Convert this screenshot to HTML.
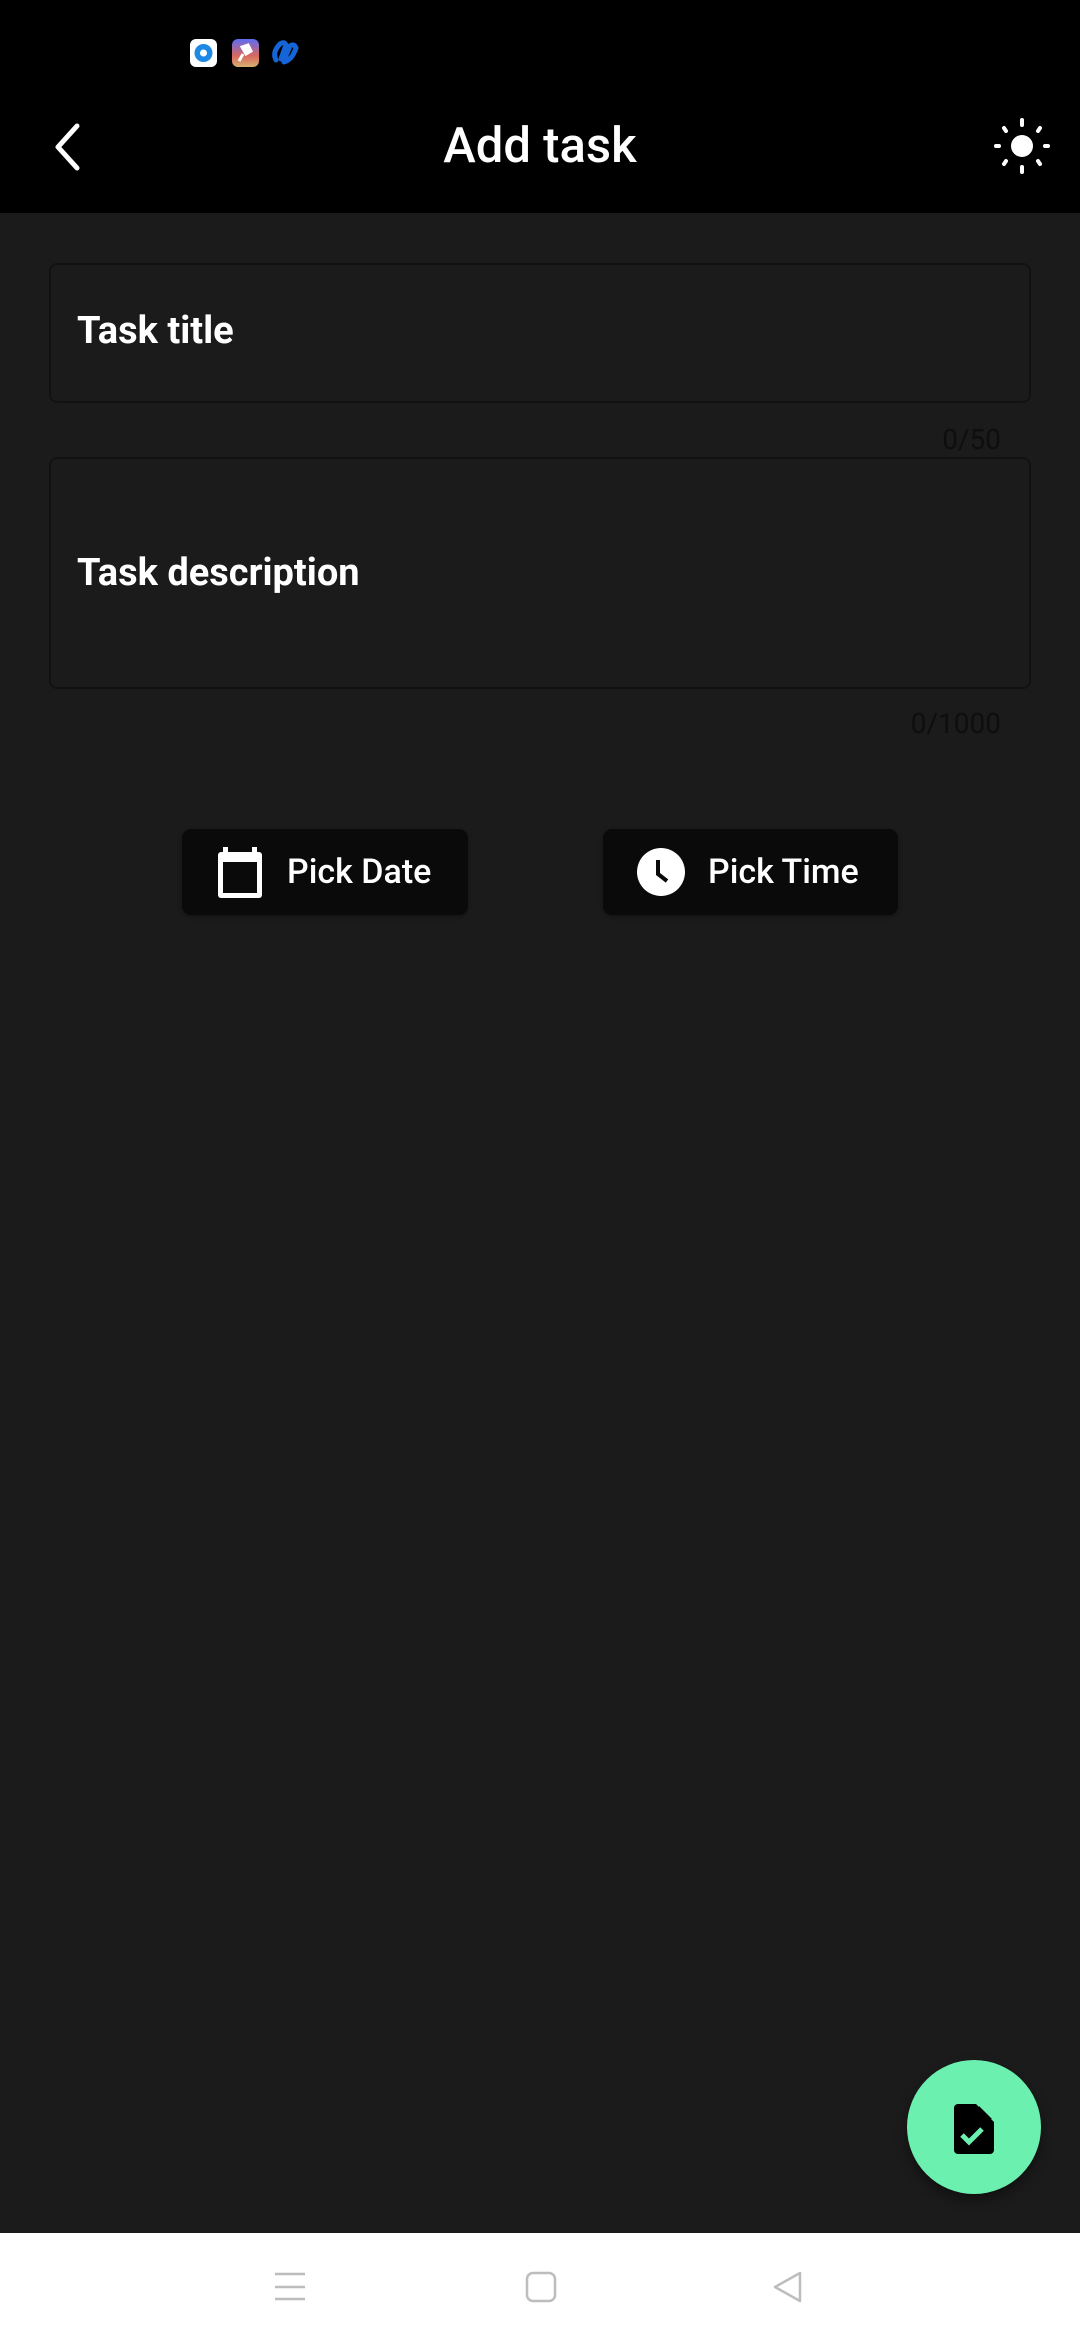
<!DOCTYPE html>
<html><head><meta charset="utf-8">
<style>
*{margin:0;padding:0;box-sizing:border-box}
html,body{width:1080px;height:2340px;overflow:hidden;background:#1b1b1b;font-family:"Roboto","Liberation Sans",sans-serif}
.abs{position:absolute}
#top{left:0;top:0;width:1080px;height:213px;background:#000}
.title{left:0;width:1080px;top:116px;text-align:center;color:#fff;font-size:49px;line-height:60px;font-weight:500}
.field{left:49px;width:982px;border:2px solid #121212;border-radius:8px;background:#1b1b1b}
.lbl{left:77px;color:#fff;font-weight:bold;font-size:38px;line-height:46px}
.cnt{color:#0e0e0e;font-size:28px;line-height:32px;text-align:right;right:79px}
.btn{background:#0a0a0a;border-radius:9px;top:829px;height:86px;box-shadow:0 2px 4px rgba(0,0,0,.3)}
.bt{color:#fff;font-size:34px;line-height:40px;top:852px;font-weight:500}
#nav{left:0;top:2233px;width:1080px;height:107px;background:#fff}
</style></head><body>
<div id="top" class="abs"></div>
<svg class="abs" style="left:190px;top:38px" width="120" height="30" viewBox="0 0 120 30">
<rect x="0" y="1" width="27" height="28" rx="6" fill="#fff"/>
<circle cx="13.5" cy="15" r="9" fill="#1e88e5"/><circle cx="13.5" cy="15" r="3.5" fill="#fff"/>
<defs><linearGradient id="g" x1="0" y1="0" x2="0" y2="1"><stop offset="0" stop-color="#5b6cf5"/><stop offset=".6" stop-color="#d9675f"/><stop offset="1" stop-color="#d8b070"/></linearGradient></defs>
<rect x="42" y="1" width="27" height="28" rx="6" fill="url(#g)"/>
<path d="M52 9l6 -2 3 6 -5 3z M53 16l-4 7" stroke="#fff" stroke-width="3" fill="#fff"/>
<path d="M86 22 q-4 -8 4 -16 q4 -3 6 1 l-5 14 M94 24 q8 -2 12 -14 q-2 -5 -6 -2 l-6 14" stroke="#1565d8" stroke-width="5" fill="none" stroke-linecap="round"/>
</svg>
<svg class="abs" style="left:50px;top:120px" width="36" height="54" viewBox="0 0 36 54"><path d="M27 6L8 27l19 21" stroke="#fff" stroke-width="5" fill="none" stroke-linecap="round" stroke-linejoin="round"/></svg>
<div class="abs title">Add task</div>
<svg class="abs" style="left:992px;top:116px" width="60" height="60" viewBox="0 0 60 60">
<circle cx="30" cy="30" r="11" fill="#fff"/>
<g stroke="#fff" stroke-width="4" stroke-linecap="round">
<line x1="30" y1="4" x2="30" y2="9"/><line x1="30" y1="51" x2="30" y2="56"/>
<line x1="4" y1="30" x2="7" y2="30"/><line x1="53" y1="30" x2="56" y2="30"/>
<line x1="12" y1="12" x2="14" y2="15"/><line x1="48" y1="12" x2="46" y2="15"/>
<line x1="12" y1="48" x2="14" y2="45"/><line x1="48" y1="48" x2="46" y2="45"/></g></svg>

<div class="abs field" style="top:263px;height:140px"></div>
<div class="abs lbl" style="top:308px">Task title</div>
<div class="abs cnt" style="top:424px">0/50</div>
<div class="abs field" style="top:457px;height:232px"></div>
<div class="abs lbl" style="top:550px">Task description</div>
<div class="abs cnt" style="top:708px">0/1000</div>

<div class="abs btn" style="left:182px;width:286px"></div>
<svg class="abs" style="left:214px;top:844px" width="52" height="56" viewBox="0 0 52 56">
<rect x="4" y="8" width="44" height="46" rx="3" fill="#fff"/>
<rect x="9" y="18" width="34" height="31" fill="#0a0a0a"/>
<rect x="9" y="3" width="5" height="8" fill="#fff"/><rect x="38" y="3" width="5" height="8" fill="#fff"/></svg>
<div class="abs bt" style="left:287px">Pick Date</div>

<div class="abs btn" style="left:603px;width:295px"></div>
<svg class="abs" style="left:636px;top:847px" width="50" height="50" viewBox="0 0 50 50">
<circle cx="25" cy="25" r="24" fill="#fff"/><path d="M22 13v14l9 7" stroke="#0a0a0a" stroke-width="4" fill="none"/></svg>
<div class="abs bt" style="left:708px">Pick Time</div>

<div class="abs" style="left:907px;top:2060px;width:134px;height:134px;border-radius:50%;background:#6bf0b0;box-shadow:0 6px 12px rgba(0,0,0,.4)"></div>
<svg class="abs" style="left:954px;top:2104px" width="40" height="50" viewBox="0 0 40 50">
<path d="M4 0h18l18 18v28a4 4 0 0 1-4 4H4a4 4 0 0 1-4-4V4a4 4 0 0 1 4-4z" fill="#000"/>
<path d="M25 2l13 13h-13z" fill="#000"/>
<path d="M8 31l7 7 13-13" stroke="#6bf0b0" stroke-width="5" fill="none"/></svg>

<div id="nav" class="abs"></div>
<svg class="abs" style="left:270px;top:2268px" width="540" height="40" viewBox="270 2268 540 40">
<g stroke="#bdbdbd" stroke-width="2.5" fill="none">
<line x1="275" y1="2274" x2="305" y2="2274"/><line x1="275" y1="2287" x2="305" y2="2287"/><line x1="275" y1="2299" x2="305" y2="2299"/>
<rect x="527" y="2273" width="28" height="28" rx="6"/>
<path d="M800 2273v28l-25-14z" stroke-linejoin="round"/></g></svg>
</body></html>
